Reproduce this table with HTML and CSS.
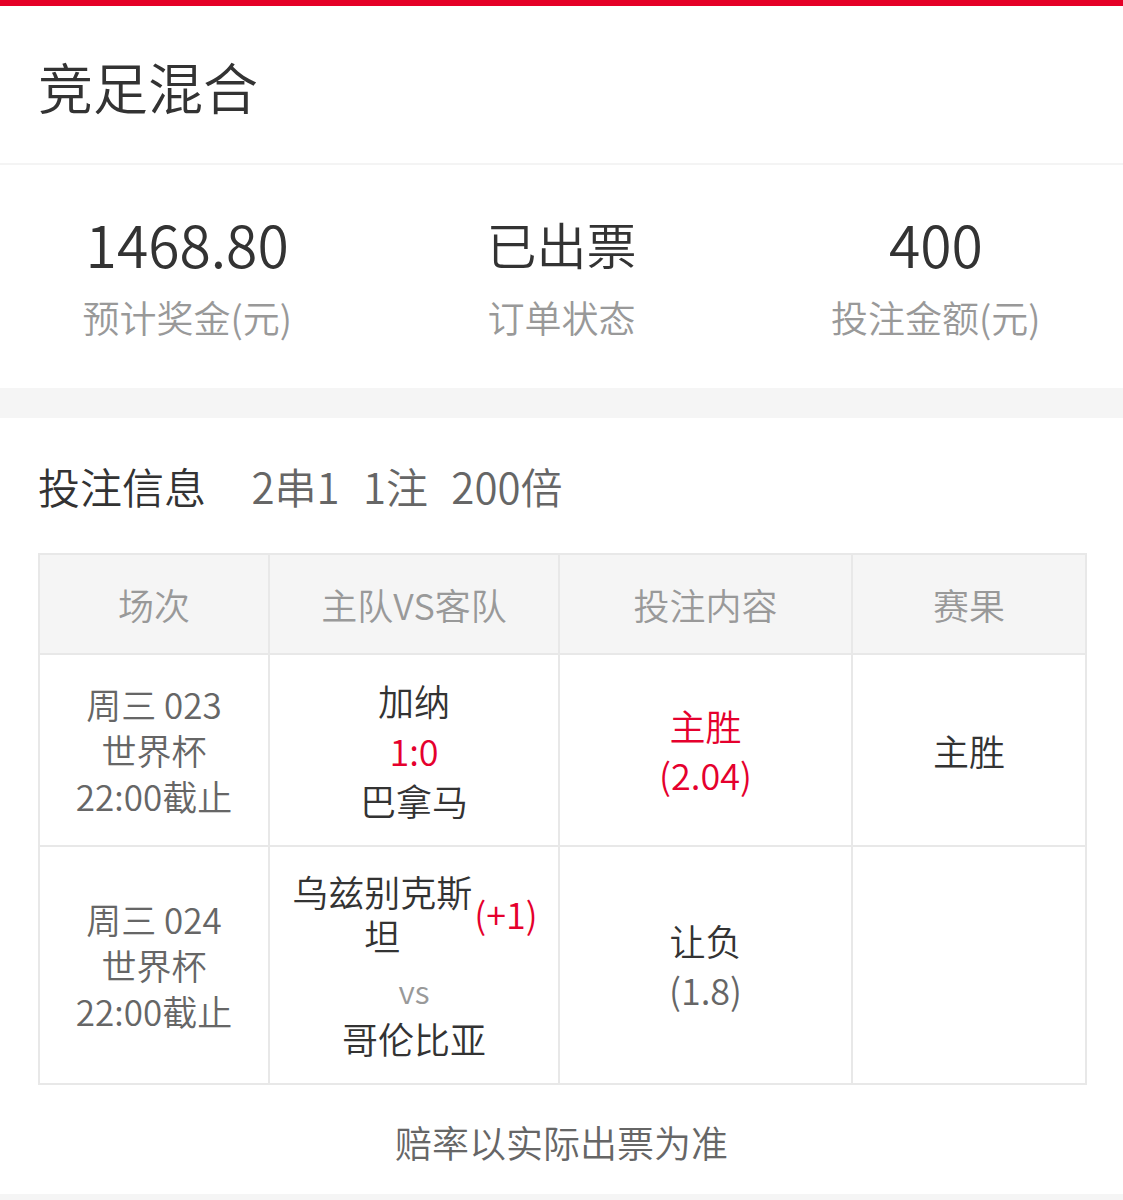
FILE: index.html
```html
<!DOCTYPE html>
<html lang="zh-CN">
<head>
    <meta charset="UTF-8">
    <meta name="viewport" content="width=device-width, initial-scale=1.0">
    <title>竞足混合</title>
    <link rel="stylesheet" href="styles.css">
</head>
<body>
    <div class="top-bar"></div>

    <div class="title-section">
        <h1>竞足混合</h1>
    </div>

    <div class="stats-section">
        <div class="stat">
            <div class="stat-value">1468.80</div>
            <div class="stat-label">预计奖金(元)</div>
        </div>
        <div class="stat">
            <div class="stat-value stat-text">已出票</div>
            <div class="stat-label">订单状态</div>
        </div>
        <div class="stat">
            <div class="stat-value">400</div>
            <div class="stat-label">投注金额(元)</div>
        </div>
    </div>

    <div class="bet-section">
        <div class="bet-title">
            <span class="bet-name">投注信息</span>
            <span class="bet-meta">2串1</span>
            <span class="bet-meta">1注</span>
            <span class="bet-meta">200倍</span>
        </div>

        <table class="bet-table">
            <colgroup>
                <col class="col-match">
                <col class="col-teams">
                <col class="col-pick">
                <col class="col-result">
            </colgroup>
            <thead>
                <tr>
                    <th>场次</th>
                    <th>主队VS客队</th>
                    <th>投注内容</th>
                    <th>赛果</th>
                </tr>
            </thead>
            <tbody>
                <tr class="row-one">
                    <td class="match-info">周三 023<br>世界杯<br>22:00截止</td>
                    <td>
                        <div class="team">加纳</div>
                        <div class="score">1:0</div>
                        <div class="team">巴拿马</div>
                    </td>
                    <td class="pick pick-hit">主胜<br>(2.04)</td>
                    <td class="result">主胜</td>
                </tr>
                <tr class="row-two">
                    <td class="match-info">周三 024<br>世界杯<br>22:00截止</td>
                    <td>
                        <div class="home-line">
                            <span class="home-name">乌兹别克斯坦</span>
                            <span class="handicap">(+1)</span>
                        </div>
                        <div class="vs">vs</div>
                        <div class="team">哥伦比亚</div>
                    </td>
                    <td class="pick">让负<br><span class="odds">(1.8)</span></td>
                    <td class="result"></td>
                </tr>
            </tbody>
        </table>

        <div class="note">赔率以实际出票为准</div>
    </div>
</body>
</html>
```

FILE: styles.css
```css
body {
    margin: 0;
    background-color: #f5f5f5;
    font-family: "Noto Sans CJK SC", "Noto Sans", sans-serif;
    font-weight: 350;
    color: #333;
}

.top-bar {
    height: 6px;
    background-color: #e50027;
}

.title-section {
    height: 157px;
    background-color: #fff;
    border-bottom: 2px solid #f4f4f4;
    padding: 0 38px;
    display: flex;
    align-items: center;
}

.title-section h1 {
    margin: 0;
    font-size: 55px;
    font-weight: 350;
    line-height: 80px;
    color: #333;
}

.stats-section {
    height: 223px;
    background-color: #fff;
    display: flex;
    margin-bottom: 30px;
}

.stat {
    flex: 1;
    text-align: center;
    padding-top: 46px;
}

.stat-value {
    font-size: 57px;
    line-height: 64px;
    color: #333;
}

.stat-value.stat-text {
    font-size: 50px;
}

.stat-label {
    margin-top: 20px;
    font-size: 37px;
    line-height: 44px;
    color: #999;
}

.bet-section {
    background-color: #fff;
    padding: 38px 38px 27px;
}

.bet-title {
    font-size: 42px;
    line-height: 60px;
}

.bet-name {
    color: #333;
    margin-right: 22px;
}

.bet-meta {
    color: #666;
    margin-left: 14px;
}

.bet-table {
    margin-top: 37px;
    width: 1047px;
    border-collapse: collapse;
    table-layout: fixed;
    text-align: center;
}

.col-match { width: 230px; }
.col-teams { width: 290px; }
.col-pick { width: 293px; }
.col-result { width: 234px; }

.bet-table th,
.bet-table td {
    border: 2px solid #e8e8e8;
    padding: 0;
    vertical-align: middle;
}

.bet-table th {
    height: 98px;
    background-color: #f5f5f5;
    font-size: 36px;
    font-weight: 350;
    color: #999;
}

.bet-table td {
    font-size: 36px;
    color: #333;
}

.row-one td {
    height: 190px;
}

.row-two td {
    height: 236px;
}

.bet-table td.match-info {
    font-size: 35px;
    line-height: 46px;
    color: #666;
}

.team {
    line-height: 50px;
}

.row-two .team {
    line-height: 46px;
}

.score {
    line-height: 50px;
    color: #e5002d;
}

.home-line {
    display: flex;
    justify-content: center;
    align-items: center;
}

.home-name {
    width: 184px;
    line-height: 44px;
}

.handicap {
    color: #e5002d;
}

.vs {
    margin-top: 8px;
    font-size: 32px;
    line-height: 50px;
    color: #999;
}

.pick {
    line-height: 49px;
}

.bet-table td.pick-hit {
    color: #e5002d;
}

.odds {
    color: #666;
}

.result {
    color: #333;
}

.note {
    margin-top: 32px;
    font-size: 37px;
    line-height: 50px;
    text-align: center;
    color: #666;
}
```
